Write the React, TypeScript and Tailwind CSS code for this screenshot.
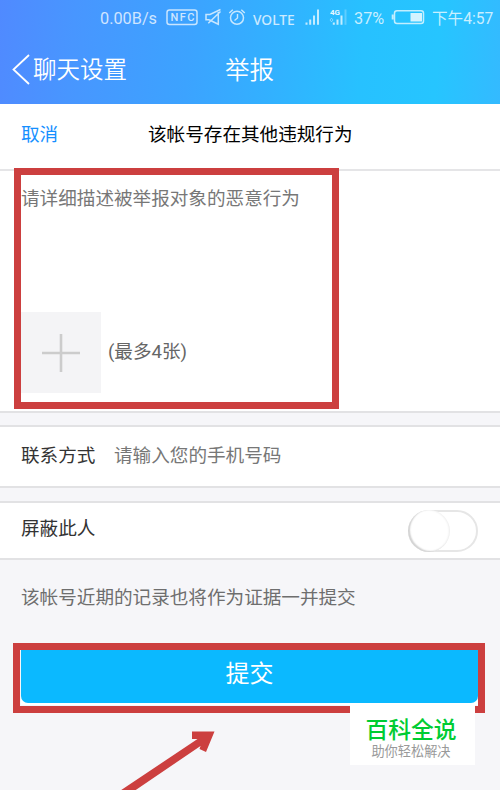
const cjk = "font-['Roboto','Noto_Sans_CJK_SC',sans-serif]";

function StatusBar() {
  return (
    <div className="relative h-9 text-[16px] leading-9 text-white/75 whitespace-nowrap">
      <svg className="absolute inset-0" width="500" height="36" viewBox="0 0 500 36" fill="none" stroke="#fff" strokeOpacity="0.72">
        <rect x="167" y="10" width="30" height="14.5" rx="2.5" strokeWidth="1.5" />
        <text x="170.5" y="21.3" fill="#fff" fillOpacity="0.75" stroke="none" fontFamily="Roboto, sans-serif" fontSize="11" fontWeight="500" textLength="24">NFC</text>
        <path d="M209 19.800H206V14.500H210L220.500 9.500M208.300 23.300L220.500 11.500M218.300 12V24.300L209 19.800" strokeWidth="1.5" />
        <circle cx="237" cy="17.8" r="6.5" strokeWidth="1.5" />
        <path d="M237.5 14v4l-3 2.5M229.300 13l3.500-3.300M241.300 9.700l3.500 3.300" strokeWidth="1.4" />
        <path d="M306.500 22.500v2.300M310.200 19.500v5.300M314 15.500v9.300M318 9.500v15.300" strokeWidth="2" />
        <text x="330" y="15" fill="#fff" fillOpacity="0.9" stroke="none" fontFamily="Roboto, sans-serif" fontSize="8" fontWeight="700" textLength="10">4G</text>
        <path d="M333.800 22.500v2.300M337.500 19.500v5.300M341.500 15.500v9.300" strokeWidth="2" />
        <path d="M345.500 9.500v15.300" strokeWidth="2" strokeOpacity="0.25" />
        <path d="M330 20l1.500-1.800 1.500 1.800-1.500 1.800z" strokeOpacity="0.4" />
        <rect x="394.500" y="10.700" width="29" height="12.800" rx="2.500" strokeWidth="1.500" />
        <path d="M392.700 14.500v5" strokeWidth="2" />
        <rect x="410.500" y="13" width="11.500" height="8.500" fill="#fff" fillOpacity="0.8" stroke="none" />
      </svg>
      <div className="flex h-full pt-px">
        <span className="ml-[100px] w-[153px] text-[16.300px]">0.00B/s</span>
        <span className="w-[101px] pt-px font-['Noto_Sans',sans-serif] text-[13.800px] font-medium">VOLTE</span>
        <span className="w-[78px] text-[16.300px]">37%</span>
        <span className="text-[15.600px]">下午4:57</span>
      </div>
    </div>
  );
}

function Header() {
  return (
    <header className="h-[104px] bg-[linear-gradient(95deg,#508aff_0%,#4896ff_15%,#3ca3ff_38%,#32b1ff_55%,#27c1ff_72%,#26c5ff_87%,#34baff_100%)]">
      <StatusBar />
      <div className="flex h-[66px] items-center text-[23.500px] font-[350] text-white">
        <svg className="ml-3 mr-[3px] shrink-0" width="18" height="32" viewBox="0 0 18 32" fill="none" stroke="#fff" strokeWidth="1.800">
          <path d="M17 2L1.500 16.500L17 31" />
        </svg>
        <span className="w-[192px] pt-[3px]">聊天设置</span>
        <span className="pt-[5px] text-[24.500px]">举报</span>
      </div>
    </header>
  );
}

function Toggle() {
  return (
    <div className="h-[42px] w-[70px] rounded-full border-2 border-[#e6e6e6] bg-white">
      <div className="-ml-0.5 -mt-0.5 h-[42px] w-[42px] rounded-full bg-white shadow-[inset_2px_-1px_1.500px_#d2d2d2,inset_-1px_0_2px_#ececec]" />
    </div>
  );
}

export default function App() {
  return (
    <div className={`relative h-[790px] w-[500px] overflow-hidden bg-[#f6f6f9] text-[18.600px] ${cjk}`}>
      <Header />
      <div className="flex h-[67px] items-center border-b-2 border-[#e5e5e7] bg-white pb-px pl-[21px]">
        <span className="w-[127px] text-[#1590ff]">取消</span>
        <span className="text-black">该帐号存在其他违规行为</span>
      </div>
      <div className="flex h-[242px] flex-col border-b-2 border-[#e2e2e4] bg-white pl-[21px] pt-3.5">
        <p className="h-[127px] leading-7 text-[#777]">请详细描述被举报对象的恶意行为</p>
        <div className="flex items-center">
          <div className="grid h-[81px] w-[80px] place-items-center bg-[#f4f4f6]">
            <svg width="38" height="38" viewBox="0 0 38 38" stroke="#ccc" strokeWidth="2.600">
              <path d="M0 19H38M19 0V38" />
            </svg>
          </div>
          <span className="ml-[7px] text-[#666]">(最多4张)</span>
        </div>
      </div>
      <div className="mt-3 flex h-[63px] items-center border-y-2 border-[#e2e2e4] bg-white pl-[21px]">
        <span className="w-[93px] text-[#333]">联系方式</span>
        <span className="text-[#777]">请输入您的手机号码</span>
      </div>
      <div className="mt-[13px] flex h-[59px] items-center justify-between border-y-2 border-[#e2e2e4] bg-white pl-[21px] pr-[22px]">
        <span className="pb-px text-[#333]">屏蔽此人</span>
        <Toggle />
      </div>
      <p className="ml-[21px] mt-[24px] h-[62px] leading-7 text-[#6e6e6e]">该帐号近期的记录也将作为证据一并提交</p>
      <div className="ml-[21px] h-[59px] w-[457px] bg-white">
        <button className="block h-[57px] w-full rounded-b-[7px] bg-[#0bb9ff] pb-px text-[24px] text-white">提交</button>
      </div>
      <div className="absolute left-[14px] top-[168px] h-[241px] w-[325px] border-[7px] border-[#cc3f3f]" />
      <div className="absolute left-[13px] top-[643px] h-[70px] w-[472px] border-[7px] border-[#cc3f3f]" />
      <svg className="absolute left-[110px] top-[725px]" width="110" height="65" viewBox="110 725 110 65" fill="#cc3f3f">
        <path d="M120.500 790.500L197.500 739H192V731.500H214.500L206 752L199.500 749L200.500 746L135 790.500Z" />
      </svg>
      <div className="absolute left-[350px] top-[705px] flex h-[60px] w-[125px] flex-col items-center bg-white pr-[3px] pt-[12px]">
        <span className="text-[22.800px] font-medium leading-[27px] text-[#0c3]">百科全说</span>
        <span className="text-[13.200px] leading-4 text-[#999]">助你轻松解决</span>
      </div>
    </div>
  );
}
